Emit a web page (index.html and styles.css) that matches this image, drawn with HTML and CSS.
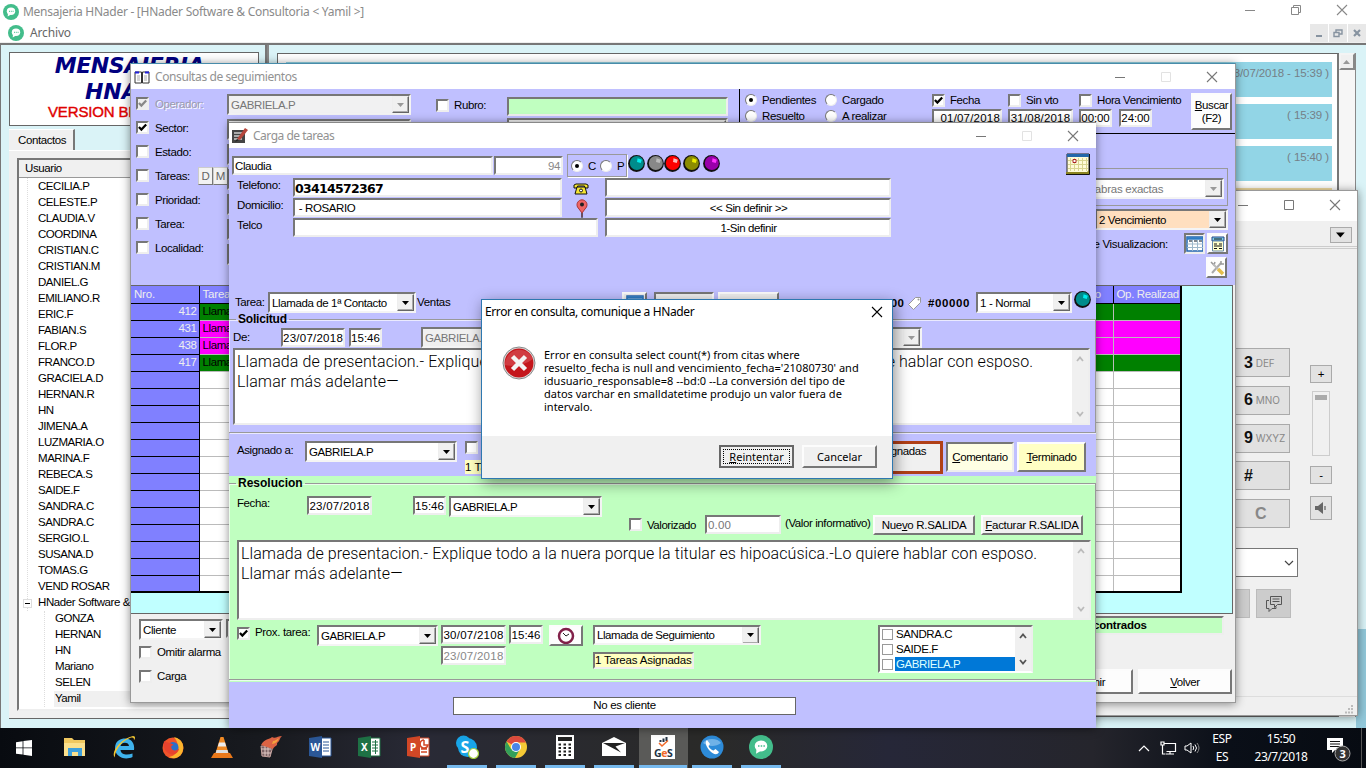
FILE: index.html
```html
<!DOCTYPE html>
<html lang="es">
<head>
<meta charset="utf-8">
<title>Mensajeria HNader</title>
<link rel="stylesheet" href="styles.css">
</head>
<body>
<svg class="defs" width="0" height="0">
  <symbol id="chat" viewBox="0 0 16 16"><circle cx="8" cy="8" r="8" fill="#43bd8b"/><ellipse cx="8" cy="7.3" rx="4.2" ry="3.7" fill="#fff"/><path d="M5 9l-.3 3.5 3.300-2z" fill="#fff"/><path d="M6 7.300h1M7.800 7.300h1M9.600 7.300h1" stroke="#43bd8b"/></symbol>
  <symbol id="min" viewBox="0 0 12 12"><path d="M1 6.500h10" stroke="currentColor"/></symbol>
  <symbol id="max" viewBox="0 0 12 12"><path d="M1.500 1.500h9v9h-9z" fill="none" stroke="currentColor"/></symbol>
  <symbol id="rest" viewBox="0 0 12 12"><path d="M1.500 3.500h7v7h-7zM3.500 3.500v-2h7v7h-2" fill="none" stroke="currentColor"/></symbol>
  <symbol id="x" viewBox="0 0 12 12"><path d="M1 1l10 10M11 1L1 11" stroke="currentColor" stroke-width="1.100"/></symbol>
  <symbol id="down" viewBox="0 0 8 8"><path d="M0 2h7L3.500 6z" fill="currentColor"/></symbol>
  <symbol id="up" viewBox="0 0 8 8"><path d="M0 6h7L3.500 2z" fill="currentColor"/></symbol>
  <symbol id="chu" viewBox="0 0 8 8"><path d="M1 6l3-3.500L7 6" fill="none" stroke="currentColor" stroke-width="1.800"/></symbol>
  <symbol id="chd" viewBox="0 0 8 8"><path d="M1 2l3 3.500L7 2" fill="none" stroke="currentColor" stroke-width="1.800"/></symbol>
  <symbol id="tick" viewBox="0 0 8 8"><path d="M.800 3.500l2.200 2.300L7.300 1.300" fill="none" stroke="currentColor" stroke-width="2"/></symbol>
  <symbol id="ball" viewBox="0 0 16 16"><circle cx="8" cy="8" r="7.900" fill="#111"/><circle cx="8.300" cy="7.600" r="6.600" fill="currentColor"/><path d="M9 3l4 1.500-1 3-3.500-1z" fill="var(--hl)"/></symbol>
  <symbol id="grid" viewBox="0 0 18 16"><path d="M1 1h16v14H1z" fill="#fff" stroke="#2366b0" stroke-width="1.500"/><path d="M1 2.500h16" stroke="#2e7cc4" stroke-width="2.500"/><path d="M6.500 4v11M11.500 4v11M1 8h16M1 11.500h16" stroke="#9fb9cc"/><path d="M3 5h3M8 5h3M13 5h3" stroke="#012"/></symbol>
</svg>

<main class="desktop">
  <section class="app">
    <header class="app-title">
      <svg class="i16"><use href="#chat"/></svg><span>Mensajeria HNader - [HNader Software &amp; Consultoria &lt; Yamil &gt;]</span>
      <div class="sys sys-app"><svg><use href="#min"/></svg><svg><use href="#rest"/></svg><svg><use href="#x"/></svg></div>
    </header>
    <nav class="app-menu">
      <svg class="i16"><use href="#chat"/></svg><span>Archivo</span>
      <div class="mdi"><i><svg viewBox="0 0 10 10"><path d="M2 8h6" stroke="#8793a0" stroke-width="2"/></svg></i><i><svg viewBox="0 0 10 10"><path d="M1 4.500h5v4H1zM3 4V2h6v4H6.500" fill="none" stroke="#8793a0" stroke-width="1.400"/></svg></i><i><svg viewBox="0 0 10 10"><path d="M2 2l6 6M8 2L2 8" stroke="#8793a0" stroke-width="2.200"/></svg></i></div>
    </nav>
    <div class="app-body">
      <aside class="side">
        <div class="brand"><b>MENSAJERIA</b><b class="b2">HNADER</b><span>VERSION BETA</span></div>
        <div class="tab">Contactos</div>
        <div class="tabpage">
          <div class="tree">
            <div class="tree-head">Usuario</div>
            <ul>
              <li>CECILIA.P</li><li>CELESTE.P</li><li>CLAUDIA.V</li><li>COORDINA</li><li>CRISTIAN.C</li><li>CRISTIAN.M</li><li>DANIEL.G</li><li>EMILIANO.R</li><li>ERIC.F</li><li>FABIAN.S</li><li>FLOR.P</li><li>FRANCO.D</li><li>GRACIELA.D</li><li>HERNAN.R</li><li>HN</li><li>JIMENA.A</li><li>LUZMARIA.O</li><li>MARINA.F</li><li>REBECA.S</li><li>SAIDE.F</li><li>SANDRA.C</li><li>SANDRA.C</li><li>SERGIO.L</li><li>SUSANA.D</li><li>TOMAS.G</li><li>VEND ROSAR</li>
              <li class="node"><i><svg width="7" height="7" viewBox="0 0 7 7"><path d="M1 3.500h5" stroke="#000"/></svg></i>HNader Software &amp;</li>
            </ul>
            <ul class="sub"><li>GONZA</li><li>HERNAN</li><li>HN</li><li>Mariano</li><li>SELEN</li><li><span class="cur">Yamil</span></li></ul>
          </div>
        </div>
      </aside>
      <section class="chat">
        <div class="msgs"><p>( 23/07/2018 - 15:39 )</p><p>( 15:39 )</p><p>( 15:40 )</p><p class="mine"></p></div>
        <div class="vbar"><i><svg width="8" height="8"><use href="#up"/></svg></i></div>
      </section>
      <div class="right-edge"></div>
    </div>
  </section>

  <section class="win phone">
    <header class="wt"><div class="sys"><svg><use href="#min"/></svg><svg><use href="#max"/></svg><svg><use href="#x"/></svg></div></header>
    <div class="ph-bar"><i><svg width="10" height="10"><use href="#down"/></svg></i></div>
    <div class="ph-main">
      <div class="keys"><div class="key"><b>3</b>DEF</div><div class="key"><b>6</b>MNO</div><div class="key"><b>9</b>WXYZ</div><div class="key"><b>#</b></div><div class="key clr"><b>C</b></div></div>
      <div class="vol"><i>+</i><div class="slider"><u></u></div><i>-</i><i class="spk"><svg width="14" height="14" viewBox="0 0 14 14"><path d="M1 5h3l5-4v12L4 9H1z" fill="#666"/><path d="M11 5v4" stroke="#777" stroke-width="1.500"/></svg></i></div>
    </div>
    <div class="ph-combo"><svg width="10" height="10" viewBox="0 0 10 10"><path d="M1 3l4 4 4-4" fill="none" stroke="#444" stroke-width="1.200"/></svg></div>
    <div class="ph-btns"><i></i><i><svg width="18" height="18" viewBox="0 0 18 18"><path d="M5.500 1.500h11v8h-4l-3 3v-3h-4zM7.500 4h7M7.500 6.500h7M4 5.500H1.500v8H4v3l3-3h4v-2" fill="none" stroke="#555"/></svg></i></div>
    <footer class="ph-foot"><svg width="9" height="9" viewBox="0 0 9 9"><path d="M6 1h2M3 4h2M6 4h2M0 7.500h2M3 7.500h2M6 7.500h2" stroke="#bbb" stroke-width="2"/></svg></footer>
  </section>

  <section class="win query">
    <header class="wt"><svg class="i16" viewBox="0 0 16 14"><path d="M1 2h6.500v11H1zM8.500 2H15v11H8.500z" fill="#fff" stroke="#333"/><path d="M1 2.500h4M11 2.500h4" stroke="#22d" stroke-width="2"/><path d="M3 6h3M3 8h3M3 10h3M10 6h3M10 8h3M10 10h3" stroke="#aaa"/></svg><span>Consultas de seguimientos</span><div class="sys off"><svg><use href="#min"/></svg><svg><use href="#max"/></svg><svg><use href="#x"/></svg></div></header>
    <div class="q-top">
      <div class="q-filters">
        <label class="dis"><i class="chk gray"><svg><use href="#tick"/></svg></i>Operador:</label>
        <label><i class="chk"><svg><use href="#tick"/></svg></i>Sector:</label>
        <label><i class="chk"></i>Estado:</label>
        <label><i class="chk"></i>Tareas:<span class="dm"><u>D</u><u>M</u></span></label>
        <label><i class="chk"></i>Prioridad:</label>
        <label><i class="chk"></i>Tarea:</label>
        <label><i class="chk"></i>Localidad:</label>
      </div>
      <div class="q-combos"><div class="combo dis2"><span>GABRIELA.P</span><i><svg><use href="#down"/></svg></i></div><div class="combo dis2"></div><div class="combo"></div><div class="combo"></div><div class="combo"></div><div class="combo"></div><div class="combo"></div></div>
      <div class="q-rubro"><label><i class="chk"></i>Rubro:</label><label><i class="chk"></i></label></div>
      <div class="q-green"><div class="field green"></div><div class="combo dis2"><span>&lt;&lt; Sin definir &gt;&gt;</span><i></i></div></div>
      <div class="q-right">
        <div class="q-search">
          <div class="radios"><label><i class="rad on"></i>Pendientes</label><label><i class="rad"></i>Cargado</label><label><i class="rad"></i>Resuelto</label><label><i class="rad"></i>A realizar</label></div>
          <div class="dt d1"><label><i class="chk"><svg><use href="#tick"/></svg></i>Fecha</label><div class="field">01/07/2018</div></div>
          <div class="dt d2"><label><i class="chk"></i>Sin vto</label><div class="field">31/08/2018</div></div>
          <div class="dt d3"><label><i class="chk"></i>Hora Vencimiento</label><div class="hrs"><div class="field">00:00</div><div class="field">24:00</div></div></div>
          <div class="btn white find"><span><u>B</u>uscar</span><span>(F2)</span></div>
        </div>
        <div class="exact"><div class="combo dis2"><span>Palabras exactas</span><i><svg><use href="#down"/></svg></i></div></div>
        <div class="combo order"><span>2 Vencimiento</span><i><svg><use href="#down"/></svg></i></div>
        <div class="view"><span>Tipo de Visualizacion:</span><i class="btn"><svg width="18" height="16"><use href="#grid"/></svg></i><i class="btn white"><svg width="14" height="16" viewBox="0 0 14 16"><path d="M1 1h12v4H1z" fill="#7fd0ec" stroke="#248"/><path d="M1.500 5h11v10h-11z" fill="#ffc" stroke="#68a"/><path d="M3 3h8M3 8h3M8 8h3M3 10h8M3 12.500h3M8 12.500h3" stroke="#111"/></svg></i></div>
        <div class="tools btn white"><svg width="16" height="16" viewBox="0 0 16 16"><path d="M3 13L12 3" stroke="#aaa" stroke-width="2"/><path d="M2 2l3 3 1-3M12 1v3h3" stroke="#999" fill="none" stroke-width="1.500"/><path d="M4 4l5 5" stroke="#bbb" stroke-width="2"/><path d="M9 9l5 5" stroke="#e4bd4c" stroke-width="3.500"/></svg></div>
      </div>
    </div>
    <div class="q-table">
      <table>
        <tr><th class="c1">Nro.</th><th class="c2">Tarea</th><th class="c3">Realizado</th><th class="c4">Op. Realizad</th></tr>
        <tr class="g"><td>412</td><td>Llamada</td><td></td><td></td></tr>
        <tr class="m"><td>431</td><td>Llamada</td><td></td><td></td></tr>
        <tr class="m"><td>438</td><td>Llamada</td><td></td><td></td></tr>
        <tr class="g"><td>417</td><td>Llamada</td><td></td><td></td></tr>
        <tr><td></td><td></td><td></td><td></td></tr><tr><td></td><td></td><td></td><td></td></tr><tr><td></td><td></td><td></td><td></td></tr><tr><td></td><td></td><td></td><td></td></tr><tr><td></td><td></td><td></td><td></td></tr><tr><td></td><td></td><td></td><td></td></tr><tr><td></td><td></td><td></td><td></td></tr><tr><td></td><td></td><td></td><td></td></tr><tr><td></td><td></td><td></td><td></td></tr><tr><td></td><td></td><td></td><td></td></tr><tr><td></td><td></td><td></td><td></td></tr><tr><td></td><td></td><td></td><td></td></tr><tr><td></td><td></td><td></td><td></td></tr>
      </table>
    </div>
    <div class="q-foot">
      <div class="qf-left"><div class="qf-row"><div class="combo cli"><span>Cliente</span><i><svg><use href="#down"/></svg></i></div><div class="field"></div></div><label><i class="chk"></i>Omitir alarma</label><label><i class="chk"></i>Carga</label></div>
      <div class="qf-right"><div class="field green found">encontrados</div><div class="qf-btns"><div class="btn white">Imprimir</div><div class="btn white"><span><u>V</u>olver</span></div></div></div>
    </div>
  </section>

  <section class="win task">
    <header class="wt"><svg class="i16" viewBox="0 0 16 16"><path d="M0 2h13v13H0z" fill="#444"/><path d="M2 5h8M2 8h6M2 11h8" stroke="#ccc" stroke-width="1.500"/><path d="M5 11L13 0l3 2L8 12z" fill="#b5463b"/><path d="M5 11l-2 3 4-2z" fill="#222"/></svg><span>Carga de tareas</span><div class="sys off"><svg><use href="#min"/></svg><svg><use href="#max"/></svg><svg><use href="#x"/></svg></div></header>
    <div class="t-name">
      <div class="field name">Claudia</div><div class="field num">94</div>
      <div class="cp"><i class="rad on"></i>C<i class="rad"></i>P</div>
      <div class="balls"><svg class="teal"><use href="#ball"/></svg><svg class="gry"><use href="#ball"/></svg><svg class="red"><use href="#ball"/></svg><svg class="olv"><use href="#ball"/></svg><svg class="pur"><use href="#ball"/></svg></div>
      <svg class="cal" width="24" height="22" viewBox="0 0 24 22"><path d="M1 1h22v20H1z" fill="#fffbd8" stroke="#222"/><path d="M1 2.500h22" stroke="#26a" stroke-width="3"/><path d="M4.500 5v13M8.500 5v13M12.500 5v13M16.500 5v13M20.500 5v13M2 7.500h20M2 11.500h20M2 15.500h20" stroke="#d8d590"/><path d="M7 6.500h3v3H7z" fill="#fff" stroke="#a22"/><path d="M0 19h21l2-2v4H0z" fill="#8b8420"/><path d="M0 21.500h23.500V1" fill="none" stroke="#111"/></svg>
    </div>
    <div class="t-info">
      <span>Telefono:</span><div class="field tel">03414572367</div><svg width="16" height="12" viewBox="0 0 16 12"><path d="M1 4V2l2-1h10l2 1v3h-3l-.500-2h-7L4 5H1z" fill="#f5e532" stroke="#111"/><path d="M4 4h8l2 7H2z" fill="#f5e532" stroke="#111"/><circle cx="8" cy="7.500" r="1.500" fill="#fff" stroke="#111"/></svg><div class="field c"></div>
      <span>Domicilio:</span><div class="field">&nbsp;- ROSARIO</div><svg width="14" height="19" viewBox="0 0 14 19"><path d="M7 18V14L2.500 8a5 5 0 1 1 9 0L7 14" fill="#ee6565" stroke="#a33"/><circle cx="7" cy="5.500" r="2" fill="#222"/><path d="M7 14v5" stroke="#222"/></svg><div class="field c">&lt;&lt; Sin definir &gt;&gt;</div>
      <span>Telco</span><div class="field wide"></div><b></b><div class="field c">1-Sin definir</div>
    </div>
    <div class="t-type">
      <span>Tarea:</span><div class="combo"><span>Llamada de 1ª Contacto</span><i><svg><use href="#down"/></svg></i></div><span class="ven">Ventas</span>
      <i class="btn gi"><svg width="18" height="16"><use href="#grid"/></svg></i><div class="btn sol">Solicitud</div><div class="btn res">Resuelto</div><b class="tt">Tarea:</b><b class="z1">00000</b><svg width="16" height="16" viewBox="0 0 16 16"><path d="M1.500 9.500l7-7h5v5l-7 7z" fill="#fff" stroke="#999"/><circle cx="11.500" cy="4.500" r="1" fill="#999"/></svg><b class="z2">#00000</b>
      <div class="combo prio"><span>1 - Normal</span><i><svg><use href="#down"/></svg></i></div><svg class="teal"><use href="#ball"/></svg>
    </div>
    <fieldset class="fs1"><legend>Solicitud</legend>
      <div class="de"><span>De:</span><div class="field">23/07/2018</div><div class="field">15:46</div><div class="combo dis2"><span>GABRIELA.P</span><i><svg><use href="#down"/></svg></i></div></div>
      <div class="memo"><p>Llamada de presentacion.- Explique todo a la nuera porque la titular es hipoacúsica.-Lo quiere hablar con esposo.<br>Llamar más adelante—</p><div class="sb"><svg><use href="#chu"/></svg><svg><use href="#chd"/></svg></div></div>
    </fieldset>
    <div class="t-asg">
      <span>Asignado a:</span><div class="combo"><span>GABRIELA.P</span><i><svg><use href="#down"/></svg></i></div>
      <div class="asg2"><i class="chk"></i><em>1 Tareas</em></div>
      <div class="redb"><span>Asignadas</span></div><div class="btn yel com"><span><u>C</u>omentario</span></div><div class="btn yel ter"><span><u>T</u>erminado</span></div>
    </div>
    <div class="resol"><fieldset class="fs2"><legend>Resolucion</legend>
      <div class="fe"><span>Fecha:</span><div class="field">23/07/2018</div><div class="field">15:46</div><div class="combo"><span>GABRIELA.P</span><i><svg><use href="#down"/></svg></i></div></div>
      <div class="va"><i class="chk"></i><span>Valorizado</span><div class="field">0.00</div><span class="vi">(Valor informativo)</span><div class="btn"><span>Nue<u>v</u>o R.SALIDA</span></div><div class="btn"><span><u>F</u>acturar R.SALIDA</span></div></div>
      <div class="memo"><p>Llamada de presentacion.- Explique todo a la nuera porque la titular es hipoacúsica.-Lo quiere hablar con esposo.<br>Llamar más adelante—</p><div class="sb"><svg><use href="#chu"/></svg><svg><use href="#chd"/></svg></div></div>
      <div class="px">
        <i class="chk"><svg><use href="#tick"/></svg></i><span>Prox. tarea:</span><div class="combo"><span>GABRIELA.P</span><i><svg><use href="#down"/></svg></i></div>
        <div class="dates"><div class="field">30/07/2108</div><div class="field old">23/07/2018</div></div><div class="field hr">15:46</div>
        <div class="btn white clk"><svg width="18" height="18" viewBox="0 0 18 18"><circle cx="9" cy="9" r="7" fill="#fff" stroke="#812049" stroke-width="2.500"/><path d="M6 6l3 3 3-2" fill="none" stroke="#222"/></svg></div>
        <div class="seg"><div class="combo"><span>Llamada de Seguimiento</span><i><svg><use href="#down"/></svg></i></div><div class="field ta">1 Tareas Asignadas.</div></div>
        <div class="clist"><ul><li><i></i><span>SANDRA.C</span></li><li><i></i><span>SAIDE.F</span></li><li class="s"><i></i><span>GABRIELA.P</span></li></ul><div class="sb dk"><svg><use href="#chu"/></svg><svg><use href="#chd"/></svg></div></div>
      </div>
    </fieldset></div>
    <div class="nocli">No es cliente</div>
  </section>

  <section class="dialog">
    <header><span>Error en consulta, comunique a HNader</span><svg width="12" height="12"><use href="#x"/></svg></header>
    <div class="dl-body"><svg width="34" height="34" viewBox="0 0 34 34"><circle cx="17" cy="17" r="16" fill="#ddd" stroke="#888"/><circle cx="17" cy="17" r="14.500" fill="#c4161c"/><path d="M3 19a14.500 14.500 0 0 1 28-6c-8 6-18 8-28 6z" fill="#d9555a" opacity=".6"/><path d="M10.500 10.500l13 13M23.500 10.500l-13 13" stroke="#f4f4f4" stroke-width="4.500"/></svg>
      <p>Error en consulta select count(*) from citas where<br>resuelto_fecha is null and vencimiento_fecha='21080730' and<br>idusuario_responsable=8 --bd:0 --La conversión del tipo de<br>datos varchar en smalldatetime produjo un valor fuera de<br>intervalo.</p></div>
    <footer><div class="btn def"><span><u>R</u>eintentar</span></div><div class="btn">Cancelar</div></footer>
  </section>

  <footer class="taskbar">
    <div class="ti start"><svg width="16" height="16" viewBox="0 0 16 16"><path d="M0 2.200l6.600-1v6.300H0zM7.400 1.100L16 0v7.500H7.400zM0 8.300h6.600v6.300L0 13.700zM7.400 8.300H16V16l-8.600-1.200z" fill="#fff"/></svg></div>
    <div class="ti"><svg viewBox="0 0 24 24"><path d="M1 3h8l2 2h11v16H1z" fill="#f0c860"/><path d="M1 8h21v13H1z" fill="#fbe08c"/><path d="M5 21v-8h14v8h-4v-4h-6v4z" fill="#3ea0dc"/></svg></div>
    <div class="ti"><svg viewBox="0 0 24 24"><path d="M22 15H8.500c.500 5 7 5.500 12 3.500V22C12 26 3 21 3 13.500S8 3.500 13.500 3.500 23 8 22 15zM8.500 11H17c0-4.500-8-4.500-8.500 0z" fill="#3fb2ec"/><path d="M3 22.500C-2 18 8 4 21 1c3 0 2 3 1 4 0-3-2-3-6-1C9 7 2 17 3 22.500z" fill="#f4c732"/></svg></div>
    <div class="ti"><svg viewBox="0 0 24 24"><circle cx="12" cy="13" r="10.500" fill="#f0532a"/><path d="M13 2c9 2 11 10 8 16s-10 6-13 4c10-2 12-11 5-20z" fill="#fcb52d"/><circle cx="12" cy="12.500" r="5.500" fill="#2b6fca"/><path d="M3 6c4 2 7 2 10 4-4 0-3 4-1 5s5 0 6-2c0 6-7 8-11 5S2 11 3 6z" fill="#e8432e"/></svg></div>
    <div class="ti"><svg viewBox="0 0 24 24"><path d="M10.500 2h3l5 16h-13z" fill="#f08a24"/><path d="M9 7.500h6l1.200 4H7.800z" fill="#eee"/><path d="M6.500 15h11l1 4h-13z" fill="#ddd"/><path d="M4 18h16l3 5H1z" fill="#e9781a"/></svg></div>
    <div class="ti"><svg viewBox="0 0 24 24"><path d="M2 11h12l-3 11-8-1z" fill="#7b6264" stroke="#c9a5a0"/><path d="M2 14h10M3 18h9M6 11v10M9 11v10" stroke="#e2c9c4"/><path d="M2 10C6 3 10 5 13 2c3 2 6-1 10-1-3 3-2 5-5 7 1 3-3 3-4 6z" fill="#dc6344"/><path d="M14 6c2 0 4-2 6-3-1 3-4 6-7 6z" fill="#f5a23c"/></svg></div>
    <div class="ti"><svg viewBox="0 0 24 24"><path d="M13 3h10v18H13z" fill="#fff" stroke="#2b5797"/><path d="M15 7h6M15 10h6M15 13h6M15 16h6" stroke="#2b5797"/><path d="M1 3l13-2v22L1 21z" fill="#2b5797"/><text x="2.500" y="16" class="ol">W</text></svg></div>
    <div class="ti"><svg viewBox="0 0 24 24"><path d="M13 3h10v18H13z" fill="#fff" stroke="#1e7145"/><path d="M15 7h6M15 10h6M15 13h6M15 16h6M18.500 5v14" stroke="#1e7145"/><path d="M1 3l13-2v22L1 21z" fill="#1e7145"/><text x="4" y="16" class="ol">X</text></svg></div>
    <div class="ti"><svg viewBox="0 0 24 24"><path d="M13 3h10v18H13z" fill="#fff" stroke="#d24726"/><path d="M18 5v5h4a4 4 0 1 1-4-5M15 14h6M15 17h6" fill="none" stroke="#d24726" stroke-width="1.500"/><path d="M1 3l13-2v22L1 21z" fill="#d24726"/><text x="4" y="16" class="ol">P</text></svg></div>
    <div class="ti run"><svg viewBox="0 0 24 24"><circle cx="8.500" cy="8" r="7.500" fill="#18a5e8"/><circle cx="12.500" cy="12.500" r="9.500" fill="#18a5e8"/><text x="5.500" y="18" class="sk">S</text><circle cx="18.500" cy="18.500" r="5" fill="#fff" stroke="#a0cf3c" stroke-width="1.200"/></svg></div>
    <div class="ti run"><svg viewBox="0 0 24 24"><circle cx="12" cy="12" r="11" fill="#f5c935"/><path d="M12 12L2.500 6.500A11 11 0 0 1 22 7.500H12z" fill="#dd4b3e"/><path d="M2.500 6.500A11 11 0 0 0 11 23l5-9-4-2-5 2z" fill="#34a05a"/><circle cx="12" cy="12" r="5" fill="#fff"/><circle cx="12" cy="12" r="4" fill="#4a86e8"/></svg></div>
    <div class="ti run"><svg viewBox="0 0 24 24"><path d="M3 0h18v24H3z" fill="#fff"/><path d="M5 2h14v4H5z" fill="#222"/><path d="M5.500 9.500h14M5.500 13h14M5.500 16.500h14M5.500 20h14" stroke="#222" stroke-width="2" stroke-dasharray="2.500 2.500"/></svg></div>
    <div class="ti run"><svg viewBox="0 0 24 24"><path d="M0 8l12-6 12 6v13H0z" fill="#fff"/><path d="M1 8h22l-9.500 3.500 5.500 6z" fill="#222"/></svg></div>
    <div class="ti run act"><svg viewBox="0 0 24 24"><path d="M0 0h24v24H0z" fill="#fff"/><path d="M9.500 7V5M12.500 7V3.500M15.500 6V2" stroke="#234" stroke-width="2"/><path d="M8 8l3 3 6-5.500" fill="none" stroke="#f26a2a" stroke-width="1.500"/><text x="3" y="22" class="ges">G<tspan fill="#f26a2a">e</tspan>S</text></svg></div>
    <div class="ti run"><svg viewBox="0 0 24 24"><circle cx="12" cy="12" r="11.500" fill="#2d8bd8"/><path d="M3 8a10 7 0 0 1 18 0c-5 4-13 4-18 0z" fill="#9ccdf2" opacity=".6"/><path d="M7 5l3 4-1.500 2c1 2.500 3 4 5 4.500l2-1.500 3.500 3c-2 4-6 2-9-1S4 7 7 5z" fill="#fff"/></svg></div>
    <div class="ti run"><svg><use href="#chat"/></svg></div>
    <div class="tray">
      <svg width="12" height="8" viewBox="0 0 12 8"><path d="M1 7l5-5 5 5" fill="none" stroke="#fff" stroke-width="1.200"/></svg>
      <svg class="net" width="17" height="14" viewBox="0 0 17 14"><path d="M4.500 2.500h11v8h-9M6 13h8M10 10v3M1 1h3v3H1zM2.500 4v9h3" fill="none" stroke="#fff" stroke-width="1.200"/></svg>
      <svg class="snd" width="17" height="14" viewBox="0 0 17 14"><path d="M1 5h2l4-3v10L3 9H1z" fill="none" stroke="#fff"/><path d="M9 5q1.500 2 0 4M11 3.500q3 3.500 0 7" fill="none" stroke="#fff"/><path d="M13 2q4 5 0 10" fill="none" stroke="#888"/></svg>
      <div class="lang">ESP<br>ES</div><div class="clock">15:50<br>23/7/2018</div>
      <svg class="ac" width="26" height="26" viewBox="0 0 26 26"><path d="M1 1h16v12H9l-3 3v-3H1z" fill="#fff"/><path d="M4 4.500h10M4 7h10M4 9.500h10" stroke="#111"/><circle cx="16.500" cy="16.500" r="7.500" fill="#333" stroke="#aaa"/><text x="13.500" y="20.500" class="bd">3</text></svg>
      <div class="peek"></div>
    </div>
  </footer>
</main>
</body>
</html>
```
FILE: styles.css
```css
* { box-sizing: border-box; margin: 0; padding: 0; }
body { background: #fff; font: 11.5px/14px "Liberation Sans", Arial, sans-serif; letter-spacing: -.4px; color: #000; }
i, em { font-style: normal; }
ul { list-style: none; }
svg { display: block; flex: none; }
span, label, li, p { white-space: nowrap; }
.defs { position: absolute; }
.desktop { position: relative; width: 1366px; height: 768px; overflow: hidden; }
.i16 { width: 16px; height: 16px; }

/* shared controls */
.field { background: #fff; border: 2px solid; border-color: #777 #eee #eee #777; height: 19px; line-height: 16px; padding-left: 1px; overflow: hidden; flex: none; white-space: nowrap; }
.field.green { background: #c0ffc0; }
.field.c { text-align: center; }
.combo { display: flex; flex: none; align-items: center; background: #fff; border: 2px solid; border-color: #777 #f4f4f4 #f4f4f4 #777; height: 21px; padding-left: 2px; overflow: hidden; }
.combo > span { flex: 1; overflow: hidden; }
.combo > i { width: 17px; height: 17px; flex: none; background: #f0f0f0; border: 1px solid; border-color: #eee #666 #666 #eee; display: flex; align-items: center; justify-content: center; box-shadow: inset -1px -1px #aaa; }
.combo > i svg { width: 8px; height: 8px; }
.dis2 { color: #777; background: #f1f1f2; }
.dis2 > i svg { color: #999; }
.chk { width: 13px; height: 13px; flex: none; background: #fff; border: 2px solid; border-color: #777 #eee #eee #777; display: flex; align-items: center; justify-content: center; }
.chk svg { width: 9px; height: 9px; }
.chk.gray { background: #eee; color: #888; }
.rad { width: 12px; height: 12px; flex: none; border-radius: 50%; background: #fff; border: 1.5px solid; border-color: #777 #eee #eee #777; display: flex; align-items: center; justify-content: center; }
.rad.on::after { content: ""; width: 4px; height: 4px; border-radius: 50%; background: #000; }
.btn { background: #f0f0f0; border: 2px solid; border-color: #fcfcfc #777 #777 #fcfcfc; display: flex; flex: none; align-items: center; justify-content: center; overflow: hidden; }
.btn.white { background: #fdfdfd; }
.btn.yel { background: #ffffc4; }
label { display: flex; align-items: center; }
.sys { margin-left: auto; display: flex; }
.sys svg { width: 12px; height: 12px; }

/* main application */
.app { height: 728px; display: flex; flex-direction: column; }
.app-title { height: 23px; display: flex; align-items: center; gap: 4px; padding-left: 3px; color: #8a8a8a; font: 12px "Noto Sans", sans-serif; letter-spacing: -.27px; }
.sys-app { gap: 34px; padding-right: 18px; margin-top: -3px; color: #888; }
.app-menu { height: 20px; display: flex; align-items: center; gap: 6px; padding-left: 8px; color: #666; font: 12px "Noto Sans", sans-serif; letter-spacing: -.15px; border-bottom: 1px solid #eee; }
.mdi { margin-left: auto; display: flex; gap: 1px; }
.mdi i { width: 18px; height: 18px; background: #e8e8e8; padding: 4px; }
.app-body { height: 685px; display: flex; background: #daf3f7; border-left: 1px solid #777; border-top: 2px solid #777; }
.side { width: 266px; border-right: 2px solid #777; padding: 7px 0 0 8px; }
.brand { width: 250px; height: 74px; background: #fff; border: 1px solid #666; display: flex; flex-direction: column; align-items: center; overflow: hidden; }
.brand b { font: italic bold 22px/25px "DejaVu Sans", sans-serif; color: #000080; letter-spacing: -.4px; margin-right: 9px; }
.brand b.b2 { letter-spacing: 0; margin: 1px 0 0 6px; }
.brand span { align-self: flex-start; margin: -1px 0 0 38px; font: 15px/17px "Liberation Sans", sans-serif; color: #e00000; letter-spacing: -.15px; -webkit-text-stroke: .4px #e00000; }
.tab { width: 66px; height: 21px; margin-top: 3px; background: #f0f0f0; border-right: 2px solid #777; border-top: 1px solid #fff; padding: 3px 0 0 9px; }
.tabpage { width: 256px; height: 569px; background: #f0f0f0; border-bottom: 1px solid #666; border-top: 1px solid #fff; padding: 7px 0 0 8px; }
.tree { width: 240px; height: 553px; background: #fff; border: 2px solid #777; border-bottom-color: #eee; }
.tree-head { height: 18px; background: #f0f0f0; border-bottom: 1px solid #999; padding: 1px 0 0 6px; }
.tree ul { border-left: 1px dotted #ddd; margin-left: 8px; padding-top: 1px; }
.tree li { height: 16px; line-height: 15px; padding-left: 10px; letter-spacing: -.45px; }
.tree .node { display: flex; margin-left: -5px; padding-left: 0; letter-spacing: -.42px; }
.node i { width: 9px; height: 9px; margin: 4px 6px 0 0; border: 1px solid #ddd; background: #fff; }
.tree ul.sub { margin-left: 25px; padding: 0; }
.tree .sub li { padding-left: 10px; }
.cur { display: block; background: #f0f0f0; height: 16px; margin-left: -1px; padding-left: 1px; }
.chat { flex: 1; border-left: 2px solid #888; padding: 8px 0 0 8px; display: flex; }
.msgs { flex: 1; background: #fff; border: 1px solid #666; border-right: 2px solid #777; padding: 8px 5px 0 8px; height: 664px; }
.msgs p { height: 35px; background: #92d5e6; margin-bottom: 7px; color: #758087; text-align: right; padding: 4px 3px 0 0; letter-spacing: -.1px; }
.msgs .mine { background: #f4dfa5; }
.vbar { width: 17px; background: #f6f6f6; border-right: 1px solid #888; height: 664px; }
.vbar i { display: flex; height: 17px; align-items: center; justify-content: center; border: 2px solid; border-color: #f4f4f4 #888 #888 #f4f4f4; background: #f0f0f0; color: #999; }
.right-edge { width: 10px; background: linear-gradient(#daf3f7 0 584px, #92c8da 584px); }

/* floating windows */
.win { position: absolute; box-shadow: 0 1px 9px rgba(0,0,0,.45); overflow: hidden; }
.wt { height: 26px; background: #fff; display: flex; align-items: center; padding-left: 3px; gap: 5px; color: #929292; font: 12px "Noto Sans", sans-serif; letter-spacing: -.4px; }
.wt .sys { gap: 34px; padding-right: 17px; color: #777; }
.wt .off svg:nth-child(2) { color: #e2e2e2; }

.phone { left: 1080px; top: 190px; width: 278px; height: 526px; background: #f0f0f0; border: 1px solid #999; }
.phone .wt { height: 30px; }
.phone .wt .sys { padding-right: 16px; margin-top: -2px; }
.ph-bar { height: 28px; border-bottom: 3px double #ccc; padding: 6px 5px; display: flex; justify-content: flex-end; }
.ph-bar i { width: 22px; height: 16px; border: 1px solid #aaa; background: #e2e2e2; display: flex; align-items: center; justify-content: center; }
.ph-main { height: 300px; display: flex; padding: 99px 25px 0 120px; justify-content: space-between; }
.keys { display: flex; flex-direction: column; gap: 8.800px; }
.key { width: 89px; height: 29px; border: 1px solid #aaa; background: #e1e1e1; display: flex; align-items: center; padding-left: 42px; color: #888; font: 10px Inter, sans-serif; letter-spacing: -.1px; gap: 3px; }
.key b { font: bold 16px "Liberation Sans", sans-serif; color: #111; }
.key.clr b { color: #888; margin-left: 11px; }
.vol { width: 22px; padding-top: 17px; display: flex; flex-direction: column; align-items: center; }
.vol i { width: 22px; height: 18px; border: 1px solid #aaa; background: #e2e2e2; display: flex; align-items: center; justify-content: center; }
.vol .spk { height: 24px; margin-top: 12px; }
.slider { width: 18px; height: 65px; margin: 8px 0 10px; border: 1px solid #ccc; padding: 3px 2px; }
.slider u { display: block; height: 5px; background: #aaa; }
.ph-combo { width: 90px; height: 29px; margin: -1px 0 0 127px; background: #fff; border: 1px solid #777; display: flex; align-items: center; justify-content: flex-end; padding-right: 3px; }
.ph-btns { display: flex; gap: 6px; margin: 12px 0 0 134px; }
.ph-btns i { width: 35px; height: 29px; background: #ccc; border: 1px solid #bbb; display: flex; align-items: center; justify-content: center; }
.ph-foot { height: 20px; margin-top: 78px; border-top: 1px solid #ddd; display: flex; justify-content: flex-end; align-items: flex-end; padding: 0 3px 2px 0; }

.query { left: 130px; top: 63px; width: 1106px; height: 640px; background: #f0f0f0; border-top: 1px solid #488caa; border-right: 1px solid #999; border-left: 1px solid #999; border-bottom: 1px solid #999; }
.query .wt { height: 25px; letter-spacing: -.4px; }
.q-top { height: 196px; background: #c0c0ff; display: flex; }
.q-filters { width: 96px; padding: 8px 0 0 5px; display: flex; flex-direction: column; gap: 11px; }
.q-filters label { height: 13px; gap: 6px; overflow: visible; }
.q-filters .dis { color: #9a9aae; text-shadow: 1px 1px #fff; }
.dm { display: flex; margin-left: 2px; gap: 0; }
.dm u { text-decoration: none; width: 15px; height: 18px; background: #f3f3f3; border: 1px solid; border-color: #ccc #777 #777 #ccc; text-align: center; line-height: 16px; color: #666; }
.q-combos { width: 184px; padding-top: 5px; display: flex; flex-direction: column; gap: 4px; }
.q-rubro { width: 96px; padding: 9px 0 0 25px; display: flex; flex-direction: column; gap: 11px; }
.q-rubro label { gap: 5px; }
.q-green { width: 221px; padding-top: 8px; margin-right: 11px; display: flex; flex-direction: column; gap: 2px; }
.q-green .combo span { padding-left: 15px; }
.q-right { flex: 1; border-left: 1px solid #000; }
.q-search { height: 45px; border-bottom: 1px solid #000; display: flex; padding: 4px 3px 0 5px; }
.radios { display: grid; grid-template-columns: 80px 107px; grid-auto-rows: 16px; align-content: start; margin-top: -1px; letter-spacing: -.35px; }
.radios label { gap: 5px; }
.dt { width: 76px; }
.dt label { height: 14px; margin-bottom: 2px; gap: 5px; }
.dt .field { width: 70px; text-align: right; padding: 0; letter-spacing: .2px; height: 18px; line-height: 15px; }
.dt.d2 .field { width: 65px; text-align: center; }
.dt.d2 { width: 71px; }
.dt.d3 { width: 112px; }
.hrs { display: flex; gap: 7px; }
.dt .hrs .field { width: 33px; text-align: center; letter-spacing: -.1px; }
.find { width: 41px; height: 37px; flex-direction: column; line-height: 13px; }
.exact { width: 462px; height: 38px; margin: 34px 0 0 26px; border: 1px solid #999; padding: 9px 3px 0 0; display: flex; justify-content: flex-end; }
.exact .combo { width: 180px; background: #fff; }
.exact .combo span { padding-left: 31px; letter-spacing: -.25px; }
.order { width: 133px; margin: 3px 0 0 355px; background: #ffdfbf; }
.view { display: flex; align-items: center; height: 23px; margin: 2px 0 0 309px; }
.view > span { width: 133px; padding-left: 15px; letter-spacing: -.33px; }
.view .btn { width: 21px; height: 21px; margin-left: 2px; }
.view .btn:nth-child(2) { border-color: #777 #eee #eee #777; }
.tools { width: 21px; height: 21px; margin: 2px 0 0 466px; }
.q-table { height: 329px; background: #c0ffff; border-top: 1px solid #666; border-bottom: 1px solid #666; border-right: 1px solid #666; margin-right: 2px; }
.q-table table { width: 1051px; border-collapse: collapse; table-layout: fixed; border-right: 2px solid #000; border-bottom: 2px solid #000; }
.q-table th { height: 17px; background: #8080ff; color: #eee; font-weight: normal; text-align: left; border-right: 1px solid #000; border-bottom: 1px solid #000; padding: 0 0 0 3px; line-height: 15px; white-space: nowrap; overflow: hidden; letter-spacing: -.2px; }
.q-table th.c4 { letter-spacing: -.35px; }
.c1 { width: 68px; } .c3 { width: 65px; } .c4 { width: 68px; }
.q-table td { height: 17px; background: #fff; border: 1px solid #bbb; line-height: 15px; padding: 0 3px; overflow: hidden; }
.q-table td:first-child { background: #8080ff; color: #eee; border: 1px solid #000; border-left: 0; text-align: right; padding-right: 2px; }
.q-table .g td:nth-child(n+2) { background: #008000; }
.q-table .m td:nth-child(n+2) { background: #f0f; }
.q-foot { height: 88px; display: flex; }
.qf-left { padding: 5px 0 0 8px; }
.qf-row { display: flex; gap: 3px; margin-bottom: 4px; }
.cli { width: 84px; }
.qf-row .field { width: 300px; }
.qf-left label { height: 16px; margin-bottom: 8px; gap: 5px; }
.qf-right { flex: 1; display: flex; flex-direction: column; align-items: flex-end; padding: 2px 3px 0 0; }
.found { width: 400px; margin-right: 8px; font-weight: bold; padding-left: 254px; letter-spacing: -.2px; line-height: 14px; }
.qf-btns { display: flex; gap: 5px; margin-top: 34px; }
.qf-btns .btn { height: 25px; width: 94px; }

.task { left: 229px; top: 122px; width: 867px; height: 606px; background: #c0c0ff; border-top: 1px solid #888; border-bottom: 0; }
.task .wt { height: 25px; letter-spacing: -.5px; }
.t-name { height: 30px; display: flex; padding: 8px 0 0 3px; align-items: flex-start; }
.name { width: 261px; } .num { width: 69px; margin-left: 1px; text-align: right; color: #888; padding-right: 1px; }
.cp { width: 60px; height: 23px; margin: -2px 0 0 4px; border: 1px solid #999; box-shadow: 1px 1px #fff; display: flex; align-items: center; gap: 5px; padding-left: 3px; }
.cp .rad + .rad { margin-left: -1px; }
.balls { display: flex; margin: -1px 0 0 1px; }
.balls svg, .t-type > svg.teal { width: 17px; height: 17px; }
.balls svg + svg { margin-left: 2px; }
.balls .red.red { margin-left: 0; } .balls .pur.pur { margin-left: 3px; }
.teal { color: #008c8c; --hl: #0ee; } .gry { color: #888; --hl: #bbb; } .red { color: #f00; --hl: #fbb; } .olv { color: #8c8c00; --hl: #ee0; } .pur { color: #90a; --hl: #f3f; }
.cal { margin: -3px 0 0 346px; }
.t-info { height: 113px; display: grid; grid-template-columns: 56px 269px 43px 286px; grid-auto-rows: 20px; padding-left: 8px; }
.t-info > span { line-height: 15px; letter-spacing: -.35px; }
.t-info > svg { margin: 5px 0 0 11px; }
.t-info > svg[height="19"] { margin: 1px 0 0 13px; }
.t-info .tel { font: bold 12.500px/17px "DejaVu Sans", sans-serif; letter-spacing: -.7px; padding-left: 0; }
.t-info .wide { width: 305px; }
.t-type { height: 24px; display: flex; padding: 1px 0 0 6px; }
.t-type > span { line-height: 20px; width: 33px; }
.t-type > .combo { width: 148px; letter-spacing: -.38px; }
.t-type .ven { width: 206px; padding-left: 1px; letter-spacing: -.3px; }
.t-type .gi { width: 25px; height: 22px; margin-right: 7px; }
.t-type .sol { width: 60px; border-color: #777 #fff #fff #777; margin-right: 4px; }
.t-type .res { width: 61px; }
.tt { width: 92px; padding: 4px 0 0 12px; } .z1 { width: 36px; padding-top: 4px; letter-spacing: .2px; } .t-type > svg { margin-top: 3px; } .z2 { width: 53px; padding: 4px 0 0 5px; letter-spacing: .6px; }
.t-type > .prio { width: 96px; letter-spacing: -.35px; }
.t-type > svg.teal { margin: -1px 0 0 2px; }
fieldset { border: 1px solid #999; box-shadow: inset 1px 1px #ffffffaa, 1px 1px #ffffffaa; min-width: 0; }
legend { font: bold 12px/14px "Liberation Sans", sans-serif; margin-left: 7px; padding: 0 2px; }
.fs1 { width: 867px; height: 121px; margin-top: -3px; border-left: 0; }
.fs1 legend { letter-spacing: -.2px; }
.de { display: flex; height: 22px; padding: 2px 0 0 4px; }
.de > span { width: 48px; line-height: 18px; }
.de .field { width: 64px; letter-spacing: .25px; padding: 0; text-align: center; }
.de .field + .field { width: 33px; margin: 0 39px 0 4px; letter-spacing: 0; }
.de .combo { width: 501px; background: #f0f0f0; margin-top: -1px; }
.memo { width: 857px; height: 77px; margin-left: 4px; background: #fff; border: 2px solid; border-color: #777 #eee #eee #777; display: flex; font: 16px/20px Roboto, sans-serif; font-weight: 300; }
.memo p { flex: 1; padding: 2px 0 0 2px; letter-spacing: .083px; }
.sb { width: 16px; background: #f0f0f0; color: #bbb; display: flex; flex-direction: column; align-items: center; justify-content: space-between; padding: 5px 0; }
.sb svg { width: 8px; height: 8px; }
.sb.dk { color: #555; }
.t-asg { height: 43px; display: flex; padding: 8px 0 0 8px; }
.t-asg > span { width: 68px; line-height: 19px; }
.t-asg > .combo { width: 152px; }
.asg2 { width: 300px; padding: 0 0 0 8px; }
.asg2 em { display: block; width: 100px; background: #ffffc0; margin-top: 6px; line-height: 14px; letter-spacing: .1px; }
.redb { width: 186px; height: 33px; border: 3px solid #b04018; background: #f0f0f0; padding: 0 14px 0 0; text-align: right; }
.btn.com { width: 68px; height: 30px; margin: 1px 0 0 3px; border-color: #777 #eee #eee #777; background: #ffffe4; }
.ter { width: 69px; height: 30px; margin: 1px 0 0 3px; }
.resol { height: 206px; background: #c0ffc0; }
.fs2 { width: 867px; height: 204px; border-left: 0; }
.fs2 legend { letter-spacing: 0; }
.fe { display: flex; height: 26px; padding: 6px 0 0 8px; }
.fe > span { width: 70px; line-height: 15px; }
.fe .field { width: 65px; padding: 0; text-align: center; letter-spacing: .25px; }
.fe .field + .field { width: 33px; margin: 0 3px 0 41px; letter-spacing: 0; }
.fe .combo { width: 153px; }
.va { display: flex; height: 23px; align-items: center; padding-left: 400px; margin-top: -3px; }
.va > span { width: 58px; padding-left: 5px; letter-spacing: -.45px; }
.va .field { width: 76px; margin-left: 5px; color: #777; letter-spacing: .2px; }
.va .vi { width: 92px; padding: 0 0 3px 4px; letter-spacing: -.4px; }
.va .btn { width: 102px; height: 20px; letter-spacing: -.3px; }
.va .btn + .btn { margin-left: 6px; }
.fs2 .memo { width: 854px; height: 80px; margin: 4px 0 0 8px; }
.px { display: flex; padding: 5px 0 0 8px; }
.px > .chk { margin-top: 2px; }
.px > span { width: 67px; padding: 0 0 0 5px; letter-spacing: -.35px; }
.px > .combo { width: 121px; margin-right: 3px; }
.dates { width: 65px; margin-right: 3px; }
.dates .field { letter-spacing: .25px; padding: 0; text-align: center; }
.dates .old { color: #888; margin-top: 2px; }
.hr { width: 34px; padding: 0; text-align: center; margin-right: 6px; letter-spacing: 0; }
.clk { width: 34px; height: 21px; margin-right: 10px; }
.seg { width: 168px; margin-right: 117px; }
.seg .combo { height: 20px; letter-spacing: -.45px; }
.ta { width: 101px; height: 17px; line-height: 13px; margin-top: 7px; padding: 0; background: #ffffc0; letter-spacing: -.2px; }
.clist { width: 155px; height: 48px; display: flex; background: #fff; border: 2px solid; border-color: #777 #eee transparent #777; overflow: hidden; }
.clist ul { flex: 1; }
.clist li { height: 15px; display: flex; align-items: center; gap: 2px; padding-left: 2px; line-height: 15px; }
.clist li i { width: 11px; height: 11px; border: 1px solid #999; background: #fff; }
.clist li span { flex: 1; padding-left: 1px; }
.clist .s span { background: #0078d7; color: #dff; }
.nocli { width: 343px; height: 18px; margin: 15px 0 0 224px; background: #fff; border: 1px solid #666; text-align: center; line-height: 15px; letter-spacing: -.3px; }

.dialog { position: absolute; left: 481px; top: 299px; width: 412px; height: 180px; background: #fff; border: 1px solid #2e78b0; box-shadow: 2px 4px 14px rgba(0,0,0,.45); font: 11px/13px "Noto Sans", sans-serif; letter-spacing: 0; }
.dialog header { display: flex; justify-content: space-between; padding: 5px 9px 0 3px; height: 46px; font-size: 12px; letter-spacing: -.39px; }
.dialog header svg { margin-top: 1px; }
.dl-body { display: flex; height: 90px; padding-left: 20px; gap: 8px; }
.dl-body p { padding-top: 2px; }
.dialog footer { height: 42px; background: #f0f0f0; display: flex; justify-content: flex-end; gap: 8px; padding: 9px 15px 0 0; }
.dialog .btn { width: 75px; height: 23px; padding-bottom: 1px; }
.dialog .def { border: 2px solid #666; outline: 1px dotted #000; outline-offset: -5px; }

/* taskbar */
.taskbar { height: 40px; display: flex; background: linear-gradient(90deg, #080b10, #191b20 20%, #292a36 31%, #2a2a28 52%, #262738 65%, #25252c 80%, #0a0f18 90%, #070b12); color: #fff; }
.ti { width: 49px; display: flex; align-items: center; justify-content: center; border-bottom: 3px solid transparent; background-clip: padding-box; }
.ti svg { width: 24px; height: 24px; margin-top: 1px; margin-right: 1px; }
.ti.start { margin-right: 2px; }
.ti.start svg { width: 16px; height: 16px; margin-top: 3px; }
.ti.run { background: linear-gradient(#76b9ed, #76b9ed) 4px 100% / 40px 3px no-repeat border-box; }
.ti.act { background: linear-gradient(#76b9ed, #76b9ed) 0 100% / 48px 3px no-repeat border-box, #5a5a58; }
.ol { font: bold 10px "Noto Sans", sans-serif; fill: #fff; }
.sk { font: bold 16px "Noto Sans", sans-serif; fill: #fff; }
.ges { font: bold 10.500px "Noto Sans", sans-serif; fill: #234; letter-spacing: -.4px; }
.bd { font: bold 11px "Noto Sans", sans-serif; fill: #fff; }
.tray { margin-left: auto; display: flex; align-items: center; font: 12px/18px "Noto Sans", sans-serif; letter-spacing: -.4px; text-align: center; }
.net { margin-left: 10px; } .snd { margin-left: 7px; }
.lang { width: 26px; margin-left: 8px; } .clock { width: 66px; margin-left: 4px; letter-spacing: -.45px; }
.ac { margin: 0 0 -3px 12px; }
.peek { width: 1px; height: 40px; background: #555; margin: 0 4px 0 9px; }
.tray > svg:first-child { margin-left: 0; }
.lang { transform: none; margin-right: 9px; }
```
